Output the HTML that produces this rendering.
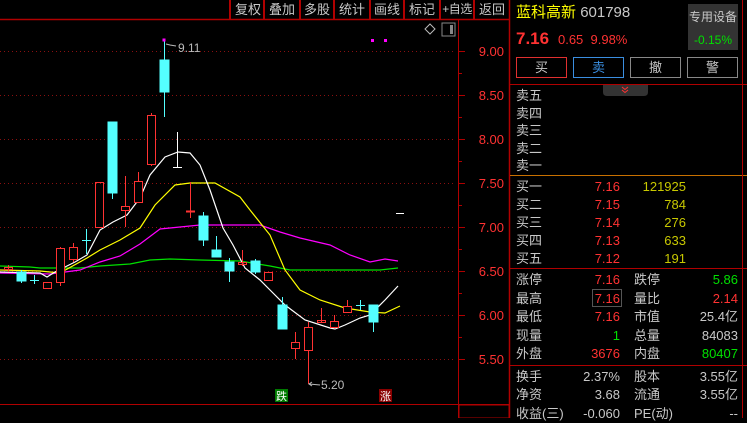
<!DOCTYPE html>
<html><head><meta charset="utf-8"><style>
body{margin:0;width:747px;height:418px;background:#000;overflow:hidden;position:relative;font-family:"Liberation Sans","Noto Sans CJK SC",sans-serif;}
.a{position:absolute;white-space:nowrap;font-size:13px;line-height:16px}
.g{color:#c8c8c8}.r{color:#ff3232}.y{color:#c8c800}.gr{color:#00e000}
.tb{position:absolute;top:0;height:19px;border-left:2px solid #b00000;color:#c8c8c8;font-size:13px;line-height:19px;text-align:center;white-space:nowrap;overflow:hidden}
.btn{position:absolute;top:57px;width:49px;height:19px;border:1px solid #888;text-align:center;font-size:13px;line-height:19px;color:#c8c8c8}
.rv{text-align:right}
</style></head><body>
<div class="tb" style="left:229px;width:34px">复权</div>
<div class="tb" style="left:263px;width:34px">叠加</div>
<div class="tb" style="left:299px;width:32px">多股</div>
<div class="tb" style="left:333px;width:34px">统计</div>
<div class="tb" style="left:369px;width:32px">画线</div>
<div class="tb" style="left:403px;width:34px">标记</div>
<div class="tb" style="left:439px;width:32px;font-size:12px;letter-spacing:-0.5px">+自选</div>
<div class="tb" style="left:473px;width:34px">返回</div>
<svg style="position:absolute;left:0;top:0" width="747" height="418">
<line x1="0" y1="19.5" x2="509" y2="19.5" stroke="#b00000" stroke-width="1.5"/>
<line x1="458.5" y1="19" x2="458.5" y2="418" stroke="#b00000"/>
<line x1="509.5" y1="0" x2="509.5" y2="418" stroke="#b00000" stroke-width="1.5"/>
<line x1="0" y1="404.5" x2="509" y2="404.5" stroke="#b00000"/>
<rect x="459" y="405" width="50" height="13" fill="none" stroke="#b00000"/>
<g stroke="#8a1010" stroke-dasharray="1 3">
<line x1="0" y1="51.5" x2="456" y2="51.5"/><line x1="0" y1="95.5" x2="456" y2="95.5"/><line x1="0" y1="139.5" x2="456" y2="139.5"/><line x1="0" y1="183.5" x2="456" y2="183.5"/><line x1="0" y1="227.5" x2="456" y2="227.5"/><line x1="0" y1="271.5" x2="456" y2="271.5"/><line x1="0" y1="315.5" x2="456" y2="315.5"/><line x1="0" y1="359.5" x2="456" y2="359.5"/>
</g>
<g stroke="#b00000"><line x1="458" y1="51.5" x2="465" y2="51.5"/><line x1="458" y1="73.5" x2="462" y2="73.5"/><line x1="458" y1="95.5" x2="465" y2="95.5"/><line x1="458" y1="117.5" x2="462" y2="117.5"/><line x1="458" y1="139.5" x2="465" y2="139.5"/><line x1="458" y1="161.5" x2="462" y2="161.5"/><line x1="458" y1="183.5" x2="465" y2="183.5"/><line x1="458" y1="205.5" x2="462" y2="205.5"/><line x1="458" y1="227.5" x2="465" y2="227.5"/><line x1="458" y1="249.5" x2="462" y2="249.5"/><line x1="458" y1="271.5" x2="465" y2="271.5"/><line x1="458" y1="293.5" x2="462" y2="293.5"/><line x1="458" y1="315.5" x2="465" y2="315.5"/><line x1="458" y1="337.5" x2="462" y2="337.5"/><line x1="458" y1="359.5" x2="465" y2="359.5"/></g>
<g fill="#ff3232" font-size="13" text-anchor="end" font-family="Liberation Sans"><text x="504" y="56">9.00</text><text x="504" y="100">8.50</text><text x="504" y="144">8.00</text><text x="504" y="188">7.50</text><text x="504" y="232">7.00</text><text x="504" y="276">6.50</text><text x="504" y="320">6.00</text><text x="504" y="364">5.50</text></g>
<path d="M430 24 L435 29 L430 34 L425 29 Z" fill="none" stroke="#bbb"/>
<rect x="442" y="23" width="13" height="13" fill="none" stroke="#888"/><rect x="450" y="25" width="3" height="9" fill="#888"/>
<rect x="371" y="39" width="3" height="3" fill="#f0f"/><rect x="384" y="39" width="3" height="3" fill="#f0f"/>
<g fill="none" stroke-width="1.2">
<polyline stroke="#00e000" points="0,266 30,267 40,268 80,268 100,266 130,264 150,260 170,259 200,260 240,261 270,266 290,270 380,270 398,268"/>
<polyline stroke="#f0f" points="0,273 50,274 80,270 100,262 120,256 140,244 160,229 180,227 200,225 260,225 280,232 300,238 330,245 350,255 370,262 385,259 398,261"/>
<polyline stroke="#ffff00" points="0,270 40,271 60,273 87,258 100,250 120,240 140,228 155,205 175,185 190,183 215,183 240,197 250,210 270,235 285,270 300,290 320,300 345,308 370,312 385,313 400,306"/>
<polyline stroke="#fff" points="0,272 40,273 47,277 55,272 75,262 87,255 100,230 113,222 127,215 140,198 150,175 165,157 178,152 190,153 200,165 210,190 223,228 233,245 245,268 260,280 270,290 285,305 305,320 330,328 335,329 345,325 360,318 370,315 385,300 398,286"/>
</g>
<g stroke="#54ffff" fill="#54ffff">
<line x1="21.5" y1="270" x2="21.5" y2="283"/><rect x="17" y="272" width="9" height="9"/>
<line x1="34.5" y1="275" x2="34.5" y2="284"/><line x1="30" y1="280.5" x2="39" y2="280.5"/>
<line x1="86.5" y1="229" x2="86.5" y2="254"/><line x1="82" y1="240.5" x2="91" y2="240.5"/>
<line x1="112.5" y1="190" x2="112.5" y2="199"/><rect x="108" y="122" width="9" height="71"/>
<line x1="164.5" y1="40" x2="164.5" y2="117"/><rect x="160" y="60" width="9" height="32"/>
<line x1="203.5" y1="212" x2="203.5" y2="246"/><rect x="199" y="216" width="9" height="24"/>
<line x1="216.5" y1="236" x2="216.5" y2="257"/><rect x="212" y="250" width="9" height="7"/>
<line x1="229.5" y1="258" x2="229.5" y2="282"/><rect x="225" y="262" width="9" height="9"/>
<line x1="255.5" y1="259" x2="255.5" y2="274"/><rect x="251" y="261" width="9" height="11"/>
<line x1="282.5" y1="297" x2="282.5" y2="329"/><rect x="278" y="305" width="9" height="24"/>
<line x1="360.5" y1="300" x2="360.5" y2="310"/><line x1="356" y1="305.5" x2="365" y2="305.5"/>
<line x1="373.5" y1="305" x2="373.5" y2="332"/><rect x="369" y="305" width="9" height="17"/>
</g>
<g stroke="#ff3232" fill="none">
<line x1="8.5" y1="265" x2="8.5" y2="272"/><rect x="4.5" y="267.5" width="8" height="2"/>
<rect x="43.5" y="282.5" width="8" height="6"/>
<line x1="60.5" y1="247" x2="60.5" y2="286"/><rect x="56.5" y="248.5" width="8" height="34" fill="#000"/>
<line x1="73.5" y1="243" x2="73.5" y2="262"/><rect x="69.5" y="247.5" width="8" height="12" fill="#000"/>
<rect x="95.5" y="182.5" width="8" height="45"/>
<line x1="125.5" y1="176" x2="125.5" y2="227"/><rect x="121.5" y="206.5" width="8" height="4" fill="#000"/>
<line x1="138.5" y1="172" x2="138.5" y2="202"/><rect x="134.5" y="181.5" width="8" height="21" fill="#000"/>
<line x1="151.5" y1="113" x2="151.5" y2="166"/><rect x="147.5" y="115.5" width="8" height="49" fill="#000"/>
<line x1="190.5" y1="182" x2="190.5" y2="218"/><line x1="186" y1="211.5" x2="195" y2="211.5" stroke-width="2"/>
<line x1="242.5" y1="250" x2="242.5" y2="266"/><rect x="238.5" y="262.5" width="8" height="2"/>
<rect x="264.5" y="272.5" width="8" height="8"/>
<line x1="295.5" y1="332" x2="295.5" y2="359"/><rect x="291.5" y="342.5" width="8" height="6" fill="#000"/>
<line x1="308.5" y1="322" x2="308.5" y2="384"/><rect x="304.5" y="327.5" width="8" height="23" fill="#000"/>
<line x1="321.5" y1="308" x2="321.5" y2="323"/><rect x="317.5" y="320.5" width="8" height="2"/>
<line x1="334.5" y1="315" x2="334.5" y2="327"/><rect x="330.5" y="321.5" width="8" height="6" fill="#000"/>
<line x1="347.5" y1="300" x2="347.5" y2="312"/><rect x="343.5" y="306.5" width="8" height="6" fill="#000"/>
</g>
<g stroke="#fff"><line x1="177.5" y1="132" x2="177.5" y2="167"/><line x1="173" y1="167.5" x2="182" y2="167.5"/><line x1="396" y1="213.5" x2="404" y2="213.5"/></g>
<rect x="162.5" y="38.5" width="3" height="3" fill="#f0f"/>
<polyline points="166,44 170,45 176,46" stroke="#bbb" fill="none"/>
<text x="178" y="52" fill="#bbb" font-size="12" font-family="Liberation Sans">9.11</text>
<polyline points="309,384 320,385" stroke="#bbb" fill="none"/><path d="M312 382 L309 384 L312 386" stroke="#bbb" fill="none"/>
<text x="321" y="389" fill="#bbb" font-size="12" font-family="Liberation Sans">5.20</text>
<rect x="275" y="389" width="13" height="13" fill="#007a00"/><text x="276" y="400" fill="#fff" font-size="11">跌</text>
<rect x="379" y="389" width="13" height="13" fill="#8a0000"/><text x="380" y="400" fill="#fff" font-size="11">涨</text>
<line x1="510" y1="84.5" x2="747" y2="84.5" stroke="#b00000"/>
<line x1="510" y1="175.5" x2="747" y2="175.5" stroke="#c87000"/>
<line x1="510" y1="268.5" x2="747" y2="268.5" stroke="#b00000"/>
<line x1="510" y1="365.5" x2="747" y2="365.5" stroke="#b00000"/>
<line x1="742.5" y1="0" x2="742.5" y2="418" stroke="#b00000"/>
<path d="M603 85 H648 V92 Q648 96 644 96 H607 Q603 96 603 92Z" fill="#333"/>
<path d="M622 87 L625 89.5 L628 87 M622 90 L625 92.5 L628 90" stroke="#ff3232" fill="none"/>
<rect x="688" y="4" width="50" height="46" fill="#333"/>
<rect x="592.5" y="289.5" width="29" height="17" fill="none" stroke="#555"/>
</svg>
<div class="a" style="left:516px;top:4px;font-size:15px;line-height:18px"><span style="color:#ffff00">蓝科高新</span> <span class="g">601798</span></div>
<div class="a" style="left:516px;top:29px;font-size:16px;line-height:20px"><b class="r" style="font-size:17px">7.16</b>&nbsp; <span class="r" style="font-size:13px">0.65&nbsp;&nbsp;9.98%</span></div>
<div class="a g" style="left:688px;top:9px;width:50px;text-align:center;font-size:12px">专用设备</div>
<div class="a gr" style="left:688px;top:32px;width:50px;text-align:center;font-size:12px">-0.15%</div>
<div class="btn r" style="left:516px;border-color:#e03030">买</div>
<div class="btn" style="left:573px;border-color:#3a8ee0;color:#3a8ee0">卖</div>
<div class="btn" style="left:630px">撤</div>
<div class="btn" style="left:687px">警</div>
<div class="a g" style="left:516px;top:87px;line-height:17.6px">卖五<br>卖四<br>卖三<br>卖二<br>卖一</div>
<div class="a g" style="left:516px;top:178px;line-height:18px">买一<br>买二<br>买三<br>买四<br>买五</div>
<div class="a r rv" style="left:580px;width:40px;top:178px;line-height:18px">7.16<br>7.15<br>7.14<br>7.13<br>7.12</div>
<div class="a y rv" style="left:620px;width:66px;top:178px;line-height:18px">121925<br>784<br>276<br>633<br>191</div>
<div class="a g" style="left:516px;top:271px;line-height:18.6px">涨停<br>最高<br>最低<br>现量<br>外盘</div>
<div class="a rv" style="left:570px;width:50px;top:271px;line-height:18.6px"><span class="r">7.16</span><br><span class="r">7.16</span><br><span class="r">7.16</span><br><span class="gr">1</span><br><span class="r">3676</span></div>
<div class="a g" style="left:634px;top:271px;line-height:18.6px">跌停<br>量比<br>市值<br>总量<br>内盘</div>
<div class="a rv" style="left:680px;width:58px;top:271px;line-height:18.6px"><span class="gr">5.86</span><br><span class="r">2.14</span><br><span class="g">25.4亿</span><br><span class="g">84083</span><br><span class="gr">80407</span></div>
<div class="a g" style="left:516px;top:368px;line-height:18.3px">换手<br>净资<br>收益(三)</div>
<div class="a g rv" style="left:560px;width:60px;top:368px;line-height:18.3px">2.37%<br>3.68<br>-0.060</div>
<div class="a g" style="left:634px;top:368px;line-height:18.3px">股本<br>流通<br>PE(动)</div>
<div class="a g rv" style="left:680px;width:58px;top:368px;line-height:18.3px">3.55亿<br>3.55亿<br>--</div>
</body></html>
